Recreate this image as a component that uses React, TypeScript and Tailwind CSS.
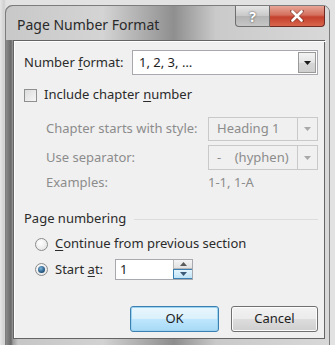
import React from 'react';

var FONT = "font-['Segoe_UI','Noto_Sans',sans-serif]";

function ComboArrow({ disabled }: { disabled?: boolean }) {
  return (
    <svg width="7" height="4" viewBox="0 0 7 4">
      <path d="M0 0h7L3.5 4z" fill={disabled ? '#a8a8a8' : '#1a1a1a'} />
    </svg>
  );
}

function Combo({ value, disabled, width }: { value: string; disabled?: boolean; width: string }) {
  if (disabled) {
    return (
      <div className={`flex h-full ${width} border border-[#c9c9c9] bg-[#f0f0f0]`}>
        <div className="flex flex-1 items-center whitespace-pre pl-[8px] text-[#8c8c8c]">{value}</div>
        <div className="flex w-[20px] items-center justify-center border-l border-[#c9c9c9]">
          <ComboArrow disabled />
        </div>
      </div>
    );
  }
  return (
    <div className={`flex h-full ${width} border border-[#a7a9ae] bg-white`}>
      <div className="flex flex-1 items-center pl-[6px] text-[#1e1e1e]">{value}</div>
      <div className="m-[1px] flex w-[18px] items-center justify-center border border-[#9a9a9a] bg-[linear-gradient(#f3f3f3,#e4e4e4_50%,#d6d6d6_51%,#cfcfcf)]">
        <ComboArrow />
      </div>
    </div>
  );
}

function Radio({ checked }: { checked?: boolean }) {
  return (
    <div className="flex h-[13px] w-[13px] items-center justify-center rounded-full border border-[#8a8b8c] bg-[radial-gradient(circle_at_40%_35%,#ffffff,#e0e0e0)]">
      {checked && (
        <div className="h-[7px] w-[7px] rounded-full bg-[radial-gradient(circle_at_40%_35%,#7ab4dc,#1f4f77_70%)]" />
      )}
    </div>
  );
}

export default function App() {
  return (
    <div className={`h-[345px] w-[335px] overflow-hidden bg-[linear-gradient(to_right,#e6e6e6,#d0d0d0_4px,#e2e2e2_6px)] px-[5px] pt-[5px] text-[13px] ${FONT}`}>
      <div className="flex h-[345px] flex-col rounded-t-[7px] border border-[#7c7c7c] bg-[linear-gradient(to_right,#8a8a8a_0px,#6a6a6a_5px,#9c9c9c_7px,#c6c6c6_12px,#d2d2d2_30%,#8d8d8d_52%,#c9c9c9_65%,#d8d8d8_100%)]">
        {/* title bar */}
        <div className="flex h-[34px] shrink-0 items-start justify-between bg-[linear-gradient(to_right,#c8c8c8,#d4d4d4_30%,#8f8f8f_52%,#cacaca_65%,#d8d8d8)] rounded-t-[7px]">
          <div className="pl-[11px] pt-[8px] text-[14px] text-[#2a2a2a]">Page Number Format</div>
          <div className="mr-[4px] flex">
            <div className="flex h-[21px] w-[35px] items-center justify-center rounded-bl-[4px] border border-t-0 border-[#6e6e6e] bg-[linear-gradient(#e6e6e6,#c8c8c8_50%,#b4b4b4_51%,#c6c6c6)] text-[14px] font-bold text-white [text-shadow:0_0_2px_#333]">
              ?
            </div>
            <div className="flex h-[21px] w-[55px] items-center justify-center rounded-br-[4px] border border-l-0 border-t-0 border-[#6e2a22] bg-[linear-gradient(#e8a596,#d4705e_45%,#c4402c_55%,#d8654c)]">
              <svg width="14" height="12" viewBox="0 0 14 12">
                <path d="M2 1l10 10M12 1L2 11" stroke="#4a1a12" strokeWidth="4" strokeLinecap="round" opacity="0.45" />
                <path d="M2.5 1.5l9 9M11.5 1.5l-9 9" stroke="#ffffff" strokeWidth="2.6" strokeLinecap="round" />
              </svg>
            </div>
          </div>
        </div>

        {/* client area */}
        <div className="mb-[10px] ml-[7px] mr-[4px] flex flex-1 border border-[#646464] bg-[#f0f0f0]">
          <div className="flex flex-1 flex-col border-l border-t border-white pr-[8px] pl-[9px] text-[#2b2b2b]">
            <div className="mt-[8px] flex h-[25px] items-center">
              <div className="w-[108px]">
                Number <span className="underline underline-offset-2">f</span>ormat:
              </div>
              <Combo value="1, 2, 3, …" width="w-[186px]" />
            </div>

            <div className="mt-[8px] flex h-[24px] items-center gap-[7px]">
              <div className="h-[13px] w-[13px] border border-[#8e8f8f] bg-[linear-gradient(135deg,#dcdcdc,#f6f6f6)]" />
              <div>
                Include chapter <span className="underline underline-offset-2">n</span>umber
              </div>
            </div>

            <div className="mt-[10px] flex h-[24px] items-center pl-[22px] text-[#8c8c8c]">
              <div className="w-[162px]">Chapter starts with style:</div>
              <Combo value="Heading 1" disabled width="w-[110px]" />
            </div>

            <div className="mt-[4px] flex h-[25px] items-center pl-[22px] text-[#8c8c8c]">
              <div className="w-[162px]">Use separator:</div>
              <Combo value="-    (hyphen)" disabled width="w-[110px]" />
            </div>

            <div className="mt-[3px] flex h-[20px] items-center pl-[22px] text-[#8c8c8c]">
              <div className="w-[162px]">Examples:</div>
              <div>1-1, 1-A</div>
            </div>

            <div className="mt-[16px] flex h-[20px] items-center gap-[8px]">
              <div>Page numbering</div>
              <div className="h-px flex-1 bg-[#dcdcdc]" />
            </div>

            <div className="mt-[5px] flex h-[20px] items-center gap-[7px] pl-[11px]">
              <Radio />
              <div>
                <span className="underline underline-offset-2">C</span>ontinue from previous section
              </div>
            </div>

            <div className="mt-[5px] flex h-[21px] items-center pl-[11px]">
              <Radio checked />
              <div className="ml-[7px] w-[60px]">
                Start <span className="underline underline-offset-2">a</span>t:
              </div>
              <div className="flex h-full w-[78px] border border-[#a7a9ae] bg-white">
                <div className="flex flex-1 items-center pl-[4px] text-[#1e1e1e]">1</div>
                <div className="flex w-[19px] flex-col">
                  <div className="flex flex-1 items-center justify-center border-l border-b border-[#b8b8b8] bg-[linear-gradient(#f4f4f4,#e2e2e2)]">
                    <svg width="7" height="4" viewBox="0 0 7 4"><path d="M0 4h7L3.5 0z" fill="#5a5a5a" /></svg>
                  </div>
                  <div className="flex flex-1 items-center justify-center border border-r-0 border-[#3c7fb1] bg-[linear-gradient(#e4f4fc,#bfe3f7)]">
                    <svg width="7" height="4" viewBox="0 0 7 4"><path d="M0 0h7L3.5 4z" fill="#3a5a78" /></svg>
                  </div>
                </div>
              </div>
            </div>

            <div className="mt-[26px] flex justify-end gap-[12px]">
              <div className="flex h-[26px] w-[89px] items-center justify-center rounded-[3px] border border-[#3c7fb1] bg-[linear-gradient(#eaf6fd,#d9f0fc_50%,#bee6fd_51%,#a7d9f5)] text-[#1e1e1e] shadow-[inset_0_0_0_1px_#9ad4f0]">
                OK
              </div>
              <div className="flex h-[26px] w-[87px] items-center justify-center rounded-[3px] border border-[#707070] bg-[linear-gradient(#f2f2f2,#ebebeb_50%,#dddddd_51%,#cfcfcf)] text-[#1e1e1e] shadow-[inset_0_0_0_1px_#fcfcfc]">
                Cancel
              </div>
            </div>
          </div>
        </div>
      </div>
    </div>
  );
}
